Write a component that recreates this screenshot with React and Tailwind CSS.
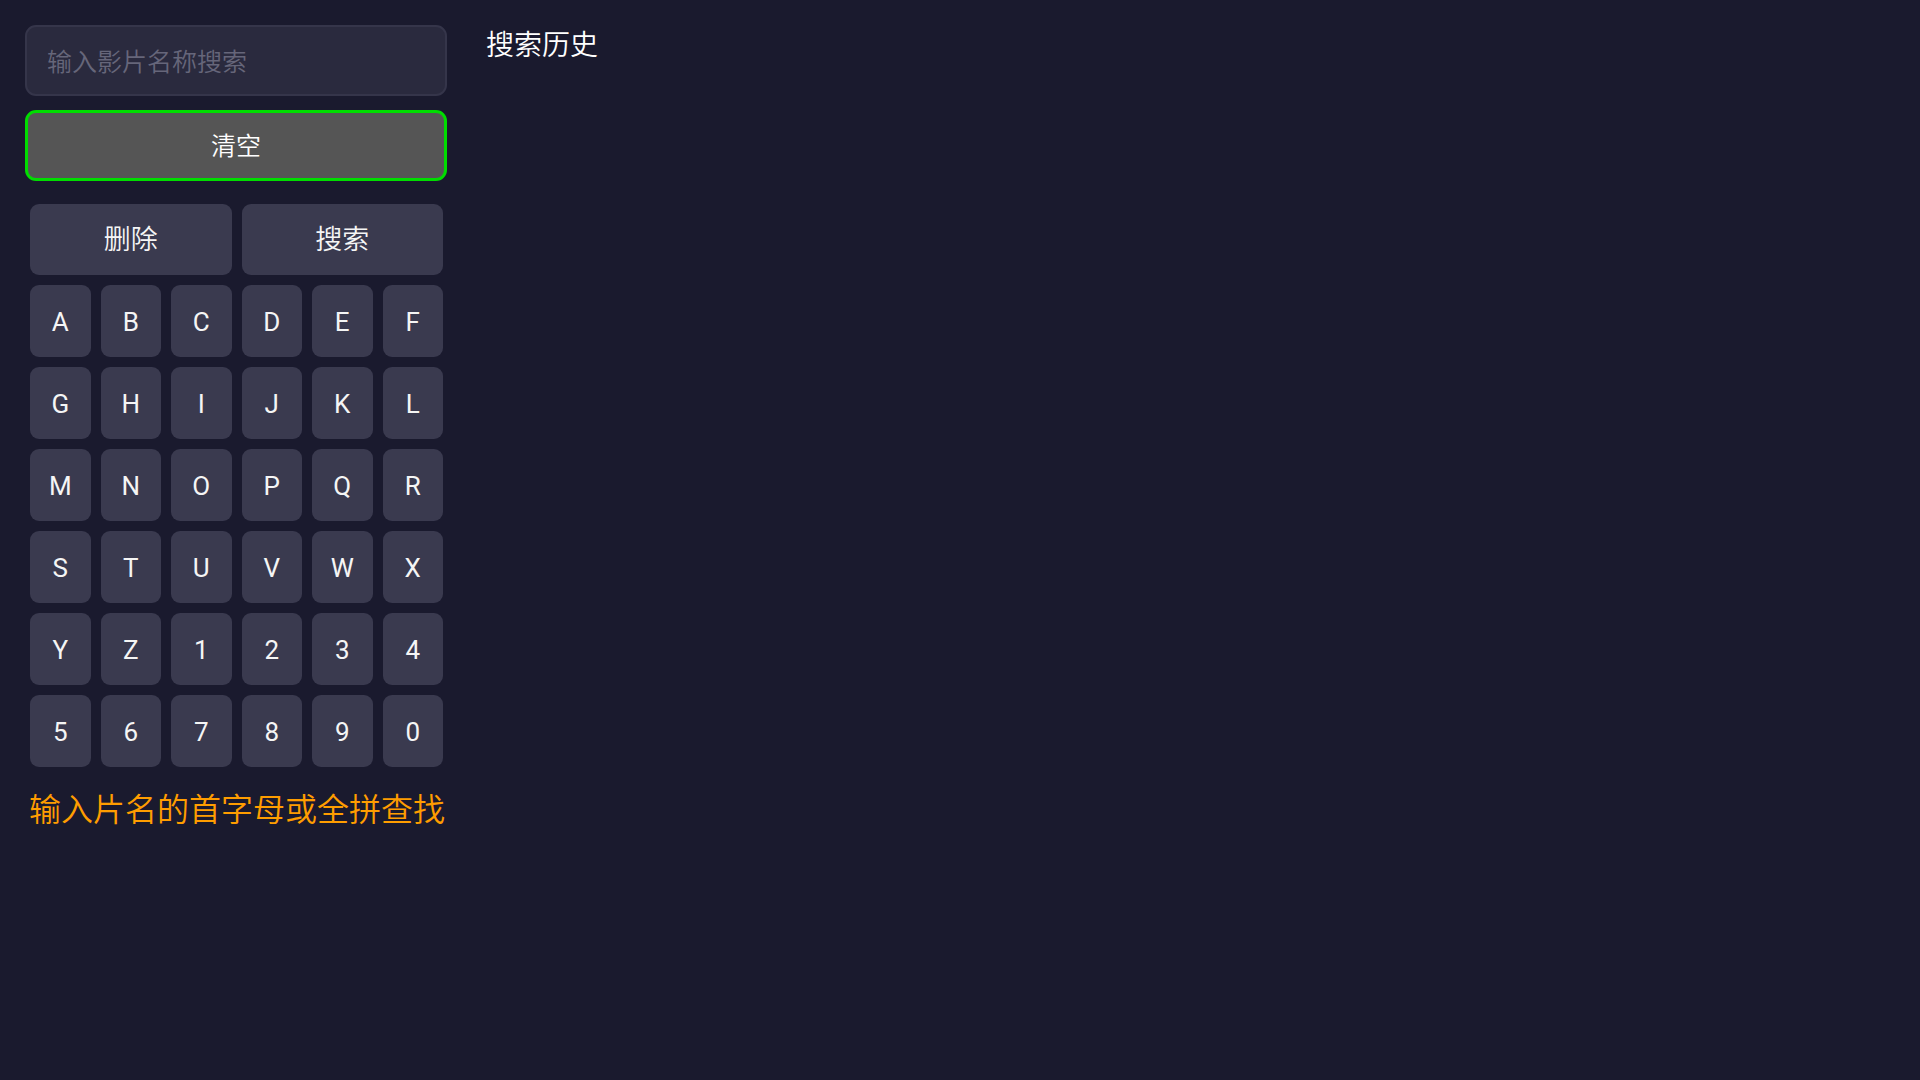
import React from "react";

const KEYS = [
  ["A", "B", "C", "D", "E", "F"],
  ["G", "H", "I", "J", "K", "L"],
  ["M", "N", "O", "P", "Q", "R"],
  ["S", "T", "U", "V", "W", "X"],
  ["Y", "Z", "1", "2", "3", "4"],
  ["5", "6", "7", "8", "9", "0"],
];

const font = "font-['Roboto','Noto_Sans_CJK_SC',sans-serif]";

const Key = ({ label, wide }) => (
  <button
    className={`flex items-center justify-center rounded-[9px] bg-[#3a3a4f] text-[#f5f5f5] pt-[2px] ${
      wide ? "h-[71px] text-[27px] font-[350]" : "h-[72px] text-[26px]"
    }`}
  >
    {label}
  </button>
);

const App = () => {
  return (
    <div className={`min-h-screen w-full bg-[#1a1a2e] ${font}`}>
      <div className="flex px-[25px] pt-[25px]">
        <div className="w-[422px] flex flex-col">
          <div className="h-[71px] rounded-[11px] border-2 border-[#35354a] bg-[#2a2a3e] flex items-center pl-[20px] pt-[4px]">
            <span className="text-[25px] font-[350] text-[#66667a]">输入影片名称搜索</span>
          </div>
          <button className="mt-[14px] h-[71px] rounded-[11px] border-[3px] border-[#00dd00] bg-[#555555] text-[25px] font-[350] text-white flex items-center justify-center pt-[2px]">
            清空
          </button>
          <div className="mt-[23px] pl-[5px] pr-[4px] flex flex-col gap-[10px]">
            <div className="grid grid-cols-2 gap-[10px]">
              <Key label="删除" wide />
              <Key label="搜索" wide />
            </div>
            {KEYS.map((row, i) => (
              <div key={i} className="grid grid-cols-6 gap-[10px]">
                {row.map((k) => (
                  <Key key={k} label={k} />
                ))}
              </div>
            ))}
          </div>
          <p className="mt-[21px] pl-[4px] text-[32px] font-[350] leading-[44px] text-[#ff9d00] whitespace-nowrap">
            输入片名的首字母或全拼查找
          </p>
        </div>
        <div className="ml-[39px] pt-[2px]">
          <h2 className="text-[28px] font-[350] leading-[38px] text-white">搜索历史</h2>
        </div>
      </div>
    </div>
  );
};

export default App;
